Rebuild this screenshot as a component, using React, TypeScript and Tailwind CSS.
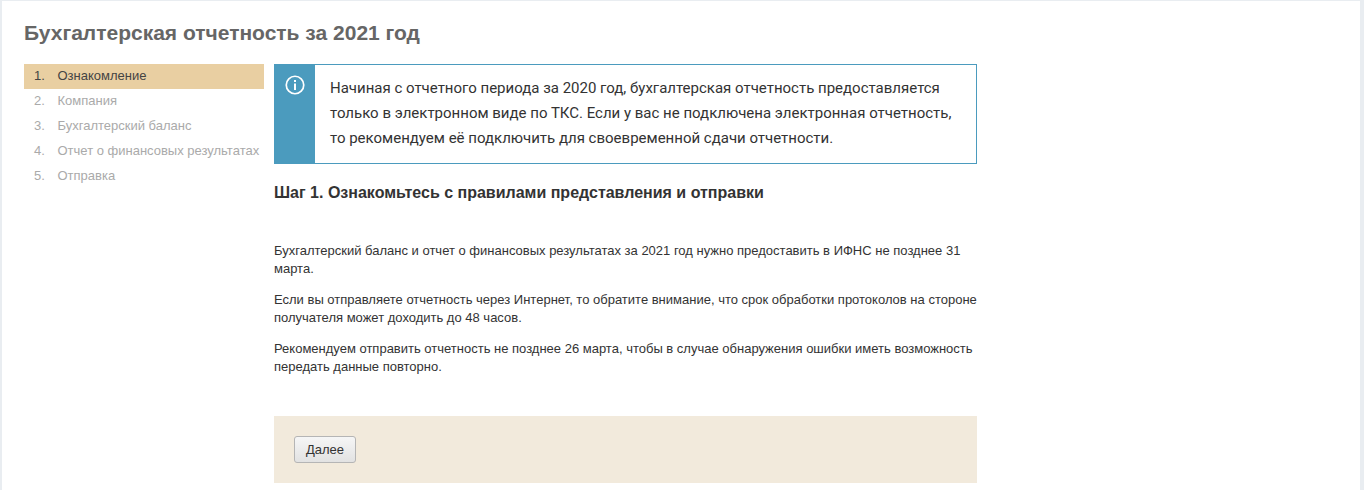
import React from "react";

const steps = ["Ознакомление", "Компания", "Бухгалтерский баланс", "Отчет о финансовых результатах", "Отправка"];

function InfoIcon() {
  return (
    <svg width="20" height="20" viewBox="0 0 20 20" fill="none" className="block">
      <circle cx="10" cy="10" r="8.75" stroke="white" strokeWidth="1.7" />
      <rect x="9" y="8.5" width="2" height="6.5" fill="white" />
      <rect x="9" y="5" width="2" height="2" fill="white" />
    </svg>
  );
}

function Sidebar() {
  return (
    <ol className="w-[240px] shrink-0 text-[13px] leading-[23px]">
      {steps.map((step, i) => (
        <li
          key={step}
          className={`flex h-[25px] pl-[10px] whitespace-nowrap ${i === 0 ? "bg-[#e9cfa2] text-[#444444]" : "text-[#aaaaaa]"}`}
        >
          <span className="w-[23.5px]">{i + 1}.</span>
          <span>{step}</span>
        </li>
      ))}
    </ol>
  );
}

export default function App() {
  return (
    <div className="h-[490px] overflow-hidden bg-[#e9edf1] pt-px pl-[2px] pr-[4px] font-['Liberation_Sans',Arial,sans-serif]">
      <div className="h-full bg-white pl-[22px] pt-[19px]">
        <h1 className="text-[21px] leading-[26px] font-bold text-[#666666]">Бухгалтерская отчетность за 2021 год</h1>
        <div className="mt-[18px] flex gap-[10px]">
          <Sidebar />
          <main className="w-[703px] text-[#333333]">
            <div className="flex h-[100px] border border-[#4b9bbe]">
              <div className="flex w-[40px] shrink-0 justify-center bg-[#4b9bbe] pt-[10px]">
                <InfoIcon />
              </div>
              <p className="pt-[11px] pl-[15px] font-['Roboto',sans-serif] text-[15px] leading-[25px]">
                Начиная с отчетного периода за 2020 год, бухгалтерская отчетность предоставляется
                <br />
                только в электронном виде по ТКС. Если у вас не подключена электронная отчетность,
                <br />
                то рекомендуем её подключить для своевременной сдачи отчетности.
              </p>
            </div>
            <h2 className="mt-[19px] text-[16px] leading-[20px] font-bold">Шаг 1. Ознакомьтесь с правилами представления и отправки</h2>
            <div className="mt-[39px] text-[13px] leading-[18px]">
              <p>Бухгалтерский баланс и отчет о финансовых результатах за 2021 год нужно предоставить в ИФНС не позднее 31 марта.</p>
              <p className="mt-[13px]">Если вы отправляете отчетность через Интернет, то обратите внимание, что срок обработки протоколов на стороне получателя может доходить до 48 часов.</p>
              <p className="mt-[13px]">Рекомендуем отправить отчетность не позднее 26 марта, чтобы в случае обнаружения ошибки иметь возможность передать данные повторно.</p>
            </div>
            <div className="mt-[40px] h-[67px] bg-[#f2eadc] pl-[20px] pt-[20px]">
              <button className="h-[27px] w-[62px] rounded-[3px] border border-[#b5b5b5] bg-gradient-to-b from-[#f6f6f6] to-[#e2e2e2] text-[13px] text-[#333333]">
                Далее
              </button>
            </div>
          </main>
        </div>
      </div>
    </div>
  );
}
